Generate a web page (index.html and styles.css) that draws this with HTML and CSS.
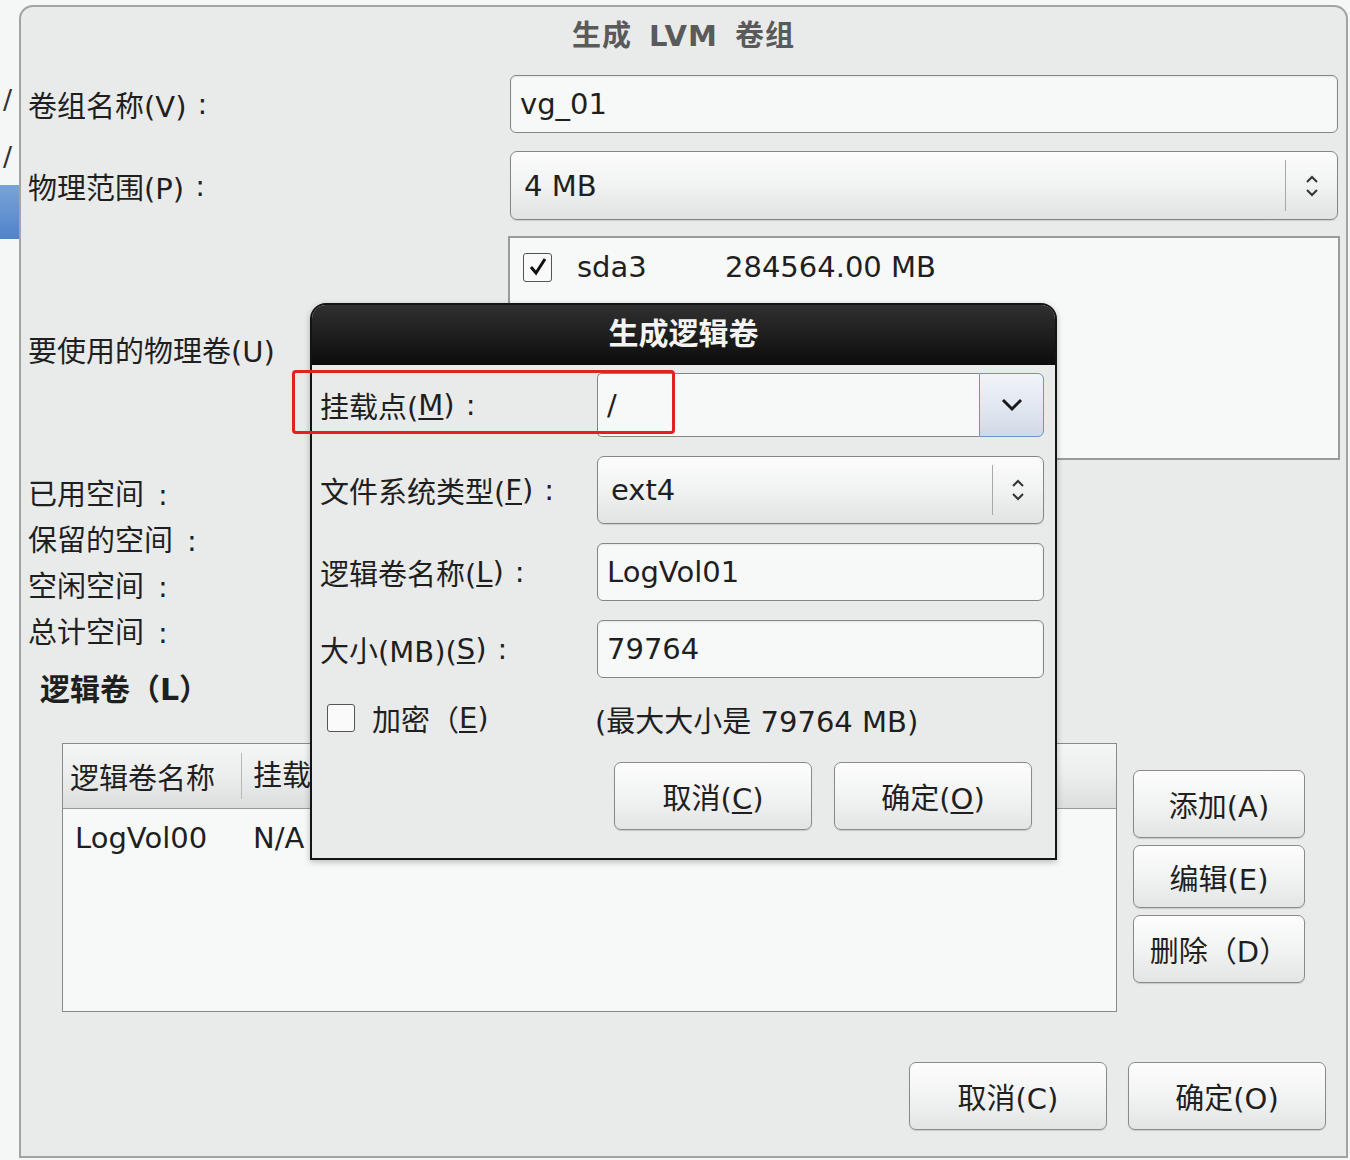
FILE: index.html
```html
<!DOCTYPE html>
<html>
<head>
    <meta charset="utf-8">
    <title>生成 LVM 卷组</title>
    <link rel="stylesheet" href="styles.css">
</head>
<body>
<div class="desktop">
    <div class="strip">
        <div class="slash">/</div>
        <div class="slash">/</div>
        <div class="strip-sel"></div>
    </div>

    <div class="window">
        <div class="win-title">生成 LVM 卷组</div>

        <div class="form">
            <label class="lbl">卷组名称(V)<span class="colon">:</span></label>
            <div class="entry">vg_01</div>

            <label class="lbl">物理范围(P)<span class="colon">:</span></label>
            <div class="select">
                <span class="val">4 MB</span>
                <span class="spin">
                    <svg width="16" height="28" viewBox="0 0 16 28"><path d="M3 10 L8 5 L13 10 M3 18 L8 23 L13 18" fill="none" stroke="#333" stroke-width="2"/></svg>
                </span>
            </div>

            <label class="lbl">要使用的物理卷(U)</label>
            <div class="pv-list">
                <div class="pv-row">
                    <span class="check on">
                        <svg width="22" height="22" viewBox="0 0 22 22"><path d="M4 11 L9 17 L18 3" fill="none" stroke="#111" stroke-width="3"/></svg>
                    </span>
                    <span class="pv-name">sda3</span>
                    <span>284564.00 MB</span>
                </div>
            </div>
        </div>

        <div class="stats">
            <div>已用空间<span class="colon">:</span></div>
            <div>保留的空间<span class="colon">:</span></div>
            <div>空闲空间<span class="colon">:</span></div>
            <div>总计空间<span class="colon">:</span></div>
        </div>

        <div class="section">逻辑卷（L）</div>

        <div class="lv-area">
            <div class="lv-table">
                <div class="lv-head">
                    <span>逻辑卷名称</span>
                    <span>挂载点</span>
                    <span>大小(MB)</span>
                </div>
                <div class="lv-row">
                    <span>LogVol00</span>
                    <span>N/A</span>
                    <span>204800</span>
                </div>
            </div>
            <div class="side-btns">
                <button class="btn tall">添加(A)</button>
                <button class="btn">编辑(E)</button>
                <button class="btn tall">删除（D）</button>
            </div>
        </div>

        <div class="actions">
            <button class="btn wide">取消(C)</button>
            <button class="btn wide">确定(O)</button>
        </div>

        <!-- modal on top of the volume group window -->
        <div class="dialog">
            <div class="dlg-title">生成逻辑卷</div>
            <div class="dlg-body">
                <label class="lbl">挂载点(<u>M</u>)<span class="colon">:</span></label>
                <div class="combo">
                    <span class="combo-entry">/</span>
                    <span class="combo-btn">
                        <svg width="24" height="14" viewBox="0 0 24 14"><path d="M3 2 L12 11 L21 2" fill="none" stroke="#1a1a1a" stroke-width="3"/></svg>
                    </span>
                </div>

                <label class="lbl">文件系统类型(<u>F</u>)<span class="colon">:</span></label>
                <div class="select small">
                    <span class="val">ext4</span>
                    <span class="spin">
                        <svg width="16" height="28" viewBox="0 0 16 28"><path d="M3 10 L8 5 L13 10 M3 18 L8 23 L13 18" fill="none" stroke="#333" stroke-width="2"/></svg>
                    </span>
                </div>

                <label class="lbl">逻辑卷名称(<u>L</u>)<span class="colon">:</span></label>
                <div class="entry">LogVol01</div>

                <label class="lbl">大小(MB)(<u>S</u>)<span class="colon">:</span></label>
                <div class="entry">79764</div>

                <label class="lbl encrypt"><span class="check"></span>加密（<u>E</u>)</label>
                <div class="max-size">(最大大小是 79764 MB)</div>

                <div class="dlg-actions">
                    <button class="btn wide">取消(<u>C</u>)</button>
                    <button class="btn wide">确定(<u>O</u>)</button>
                </div>
            </div>
        </div>

        <div class="highlight"></div>
    </div>
</div>
</body>
</html>
```

FILE: styles.css
```css
body {
    margin: 0;
    background: #f5f7f7;
    font-family: "DejaVu Sans", "Noto Sans CJK SC", sans-serif;
    font-size: 29px;
    color: #1f1f1f;
}
.desktop {
    display: flex;
    padding-top: 5px;
}
.strip {
    width: 19px;
    flex: none;
}
.slash {
    font-size: 27px;
    line-height: 30px;
    padding-left: 3px;
    color: #333;
    margin-top: 80px;
}
.slash + .slash {
    margin-top: 27px;
}
.strip-sel {
    margin-top: 13px;
    height: 54px;
    background: linear-gradient(#7aa3da, #4f84c8);
}
.window {
    position: relative;
    width: 1329px;
    height: 1153px;
    box-sizing: border-box;
    border: 2px solid #a3a3a3;
    border-radius: 14px 14px 0 0;
    background: #e9ebea;
}
.win-title {
    height: 58px;
    line-height: 58px;
    text-align: center;
    font-weight: bold;
    color: #5a5a5a;
    letter-spacing: 1px;
    word-spacing: 6px;
}
.colon {
    margin-left: 11px;
}
.form {
    display: grid;
    grid-template-columns: 482px 828px;
    row-gap: 18px;
    padding: 10px 0 0 7px;
}
.lbl {
    display: flex;
    align-items: center;
    white-space: nowrap;
}
.entry {
    height: 58px;
    box-sizing: border-box;
    border: 1.5px solid #858585;
    border-radius: 6px;
    background: #f7f9f9;
    padding-left: 9px;
    display: flex;
    align-items: center;
    box-shadow: inset 0 1px 2px rgba(0, 0, 0, 0.08);
}
.select {
    height: 69px;
    box-sizing: border-box;
    border: 1.5px solid #858585;
    border-radius: 7px;
    background: linear-gradient(#fcfcfc, #f1f2f2 50%, #e1e3e3);
    display: flex;
    align-items: center;
    padding-left: 13px;
    box-shadow: 0 1px 1px rgba(0, 0, 0, 0.12);
}
.select .val {
    flex: 1;
}
.spin {
    width: 51px;
    align-self: stretch;
    margin: 8px 0;
    border-left: 1px solid #a8a8a8;
    display: flex;
    align-items: center;
    justify-content: center;
}
.pv-list {
    height: 224px;
    box-sizing: border-box;
    margin: -2px -2px 0;
    border: 2px solid #9a9a9a;
    background: #f7f9f9;
}
.pv-row {
    display: flex;
    align-items: center;
    padding: 12px 0 0 13px;
}
.check {
    width: 29px;
    height: 29px;
    box-sizing: border-box;
    border: 1.5px solid #555;
    border-radius: 3px;
    background: #fafafa;
    display: flex;
    align-items: center;
    justify-content: center;
    flex: none;
}
.pv-name {
    width: 148px;
    margin-left: 25px;
}
.stats {
    margin-top: 12px;
    padding-left: 7px;
    line-height: 46px;
}
.stats .colon {
    margin-left: 14px;
}
.section {
    margin-top: 11px;
    padding-left: 19px;
    line-height: 46px;
    font-size: 30px;
    font-weight: bold;
}
.lv-area {
    display: flex;
    align-items: flex-start;
    margin-top: 30px;
    padding-left: 41px;
}
.lv-table {
    width: 1055px;
    height: 269px;
    box-sizing: border-box;
    border: 1.5px solid #8a8a8a;
    background: #f7f9f9;
}
.lv-head,
.lv-row {
    display: grid;
    grid-template-columns: 178px 220px 1fr;
}
.lv-head {
    height: 64px;
    align-items: center;
    background: linear-gradient(#f4f5f5, #eceeee 50%, #dcdede);
    border-bottom: 1.5px solid #9a9a9a;
}
.lv-head span {
    padding-left: 7px;
}
.lv-head span + span {
    border-left: 1px solid #b8b8b8;
    padding-left: 11px;
    line-height: 46px;
}
.lv-row {
    height: 58px;
    align-items: center;
}
.lv-row span {
    padding-left: 12px;
}
.side-btns {
    display: flex;
    flex-direction: column;
    gap: 7px;
    margin: 27px 0 0 16px;
}
.btn {
    width: 172px;
    height: 63px;
    border: 1.5px solid #8a8a8a;
    border-radius: 7px;
    background: linear-gradient(#fdfdfd, #f2f3f3 50%, #e3e5e5);
    box-shadow: 0 1px 1px rgba(0, 0, 0, 0.15);
    font-family: inherit;
    font-size: 29px;
    color: #1f1f1f;
    padding: 0;
}
.btn.tall {
    height: 68px;
}
.btn.wide {
    width: 198px;
    height: 68px;
}
.btn u {
    text-underline-offset: 3px;
}
.actions {
    display: flex;
    justify-content: flex-end;
    gap: 21px;
    margin-top: 50px;
    padding-right: 20px;
}
.dialog {
    position: absolute;
    left: 289px;
    top: 296px;
    width: 747px;
    height: 557px;
    box-sizing: border-box;
    border: 2px solid #141414;
    border-radius: 16px 16px 0 0;
    background: #e9ebea;
    overflow: hidden;
    box-shadow: 0 2px 6px rgba(0, 0, 0, 0.25);
}
.dlg-title {
    height: 60px;
    line-height: 58px;
    text-align: center;
    font-size: 30px;
    font-weight: bold;
    color: #f4f4f4;
    background: linear-gradient(#303030, #0c0c0c);
}
.dlg-body {
    display: grid;
    grid-template-columns: 277px 447px;
    row-gap: 19px;
    padding: 8px 11px 0 8px;
}
.dlg-body u {
    text-underline-offset: 3px;
}
.combo {
    height: 64px;
    display: flex;
}
.combo-entry {
    flex: 1;
    border: 1.5px solid #858585;
    border-right: none;
    border-radius: 5px 0 0 5px;
    background: #f7f9f9;
    padding-left: 9px;
    display: flex;
    align-items: center;
}
.combo-btn {
    width: 65px;
    box-sizing: border-box;
    border: 1.5px solid #6f93c6;
    border-radius: 0 6px 6px 0;
    background: linear-gradient(#f1f4f9, #e2e8f1 50%, #d0d9e6);
    display: flex;
    align-items: center;
    justify-content: center;
}
.select.small {
    height: 68px;
    padding-left: 13px;
}
.select.small .spin {
    width: 50px;
}
.encrypt {
    margin-top: 1px;
    height: 40px;
    padding-left: 7px;
}
.encrypt .check {
    width: 28px;
    height: 28px;
    margin-right: 17px;
}
.max-size {
    margin-top: 1px;
    margin-left: -2px;
    display: flex;
    align-items: center;
}
.dlg-actions {
    grid-column: span 2;
    display: flex;
    justify-content: flex-end;
    gap: 22px;
    margin-top: 3px;
    padding-right: 12px;
}
.highlight {
    position: absolute;
    left: 271px;
    top: 363px;
    width: 383px;
    height: 64px;
    box-sizing: border-box;
    border: 3px solid #e2221e;
    border-radius: 4px;
}
```
